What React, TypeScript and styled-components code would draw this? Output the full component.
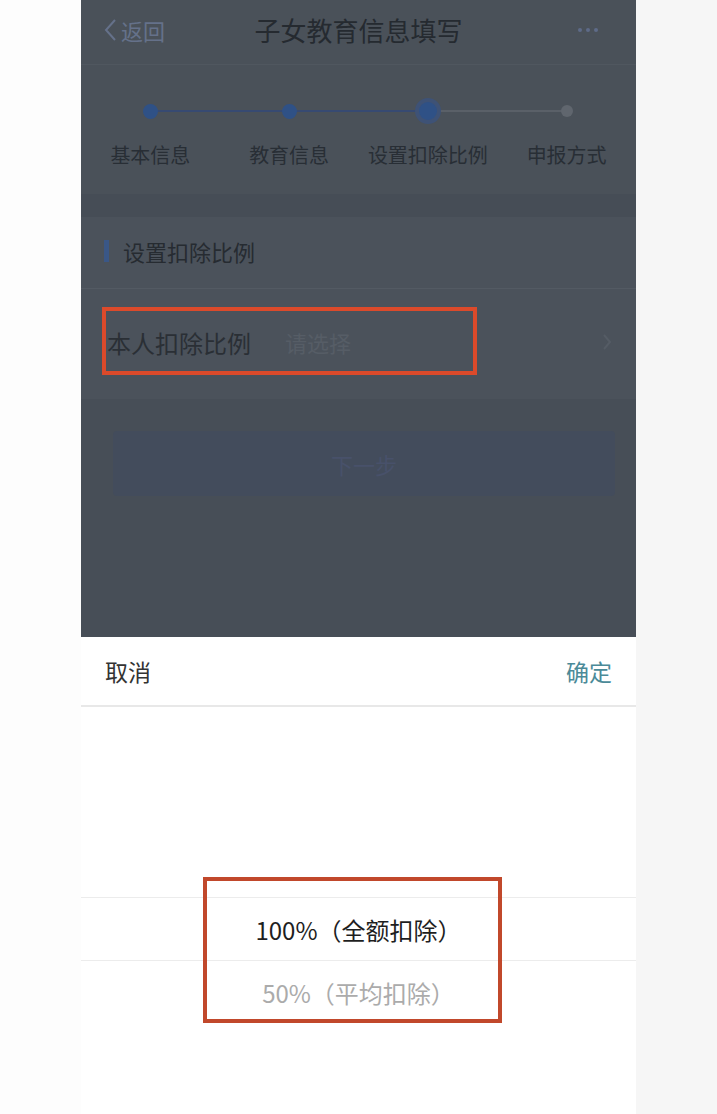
import styled, { createGlobalStyle } from 'styled-components';

const GlobalStyle = createGlobalStyle`
    html, body { margin: 0; padding: 0; background: #ffffff; }
    body { font-family: "Noto Sans CJK SC", "Noto Sans", sans-serif; }
`;

const Stage = styled.div`
    display: grid;
    grid-template-columns: 81px 555px 1fr;
    height: 1114px;
    overflow: hidden;
`;

const Margin = styled.div<{ tint?: boolean }>`
    background: ${props => (props.tint ? '#f6f6f6' : '#fdfdfd')};
`;

const Phone = styled.div`
    display: flex;
    flex-direction: column;
    height: 1114px;
`;

const DimmedPage = styled.div`
    height: 637px;
    background: #4a5159;
    display: flex;
    flex-direction: column;
    position: relative;
`;

const NavBar = styled.div`
    height: 65px;
    box-sizing: border-box;
    padding: 0 38px 5px 22px;
    border-bottom: 1px solid #50575f;
    display: flex;
    align-items: center;
    justify-content: space-between;
    position: relative;
`;

const Back = styled.div`
    display: flex;
    align-items: center;
    gap: 4px;
    color: #65718a;
    font-size: 22px;
`;

const Title = styled.div`
    position: absolute;
    left: 0;
    right: 0;
    top: 0;
    bottom: 5px;
    display: flex;
    align-items: center;
    justify-content: center;
    font-size: 26px;
    color: #252a30;
    pointer-events: none;
`;

const More = styled.div`
    display: flex;
    gap: 4px;
    span {
        width: 4px;
        height: 4px;
        border-radius: 50%;
        background: #5e6b88;
    }
`;

const Steps = styled.div`
    height: 129px;
    display: grid;
    grid-template-columns: repeat(4, 1fr);
`;

const Step = styled.div<{ lineLeft?: string; lineRight?: string }>`
    position: relative;
    display: flex;
    flex-direction: column;
    align-items: center;
    padding-top: 36px;

    &::before, &::after {
        content: '';
        position: absolute;
        top: 45px;
        height: 2px;
        width: 50%;
    }
    &::before {
        left: 0;
        background: ${props => props.lineLeft || 'transparent'};
    }
    &::after {
        right: 0;
        background: ${props => props.lineRight || 'transparent'};
    }
`;

const DotSlot = styled.div`
    height: 20px;
    display: flex;
    align-items: center;
    justify-content: center;
`;

const Dot = styled.div<{ state: 'done' | 'current' | 'todo' }>`
    position: relative;
    z-index: 1;
    width: ${props => (props.state === 'current' ? 18 : props.state === 'done' ? 15 : 12)}px;
    height: ${props => (props.state === 'current' ? 18 : props.state === 'done' ? 15 : 12)}px;
    border-radius: 50%;
    background: ${props => (props.state === 'todo' ? '#60666e' : '#2f5186')};
    box-shadow: ${props => (props.state === 'current' ? '0 0 0 4px #3e5276' : 'none')};
`;

const StepLabel = styled.div`
    margin-top: 19px;
    font-size: 20px;
    color: #282e35;
    white-space: nowrap;
`;

const Band = styled.div<{ h: number }>`
    height: ${props => props.h}px;
    background: #464d56;
`;

const Card = styled.div`
    background: #4b525b;
    display: flex;
    flex-direction: column;
`;

const SectionTitle = styled.div`
    height: 72px;
    box-sizing: border-box;
    padding: 0 0 4px 23px;
    display: flex;
    align-items: center;
    gap: 14px;
    font-size: 22px;
    color: #262b31;
    border-bottom: 1px solid #535a63;

    &::before {
        content: '';
        width: 5px;
        height: 22px;
        background: #3a5787;
    }
`;

const FieldRow = styled.div`
    height: 110px;
    box-sizing: border-box;
    display: flex;
    align-items: center;
    padding: 0 24px 4px 26px;
    position: relative;
`;

const FieldLabel = styled.div`
    font-size: 24px;
    color: #2a2f35;
    width: 178px;
`;

const FieldValue = styled.div`
    flex: 1;
    font-size: 22px;
    color: #565d66;
`;

const Highlight = styled.div<{ color: string }>`
    position: absolute;
    border: 4px solid ${props => props.color};
`;

const ButtonArea = styled.div`
    flex: 1;
    background: #474e57;
    padding: 32px 21px 0 32px;
`;

const NextButton = styled.div`
    height: 65px;
    border-radius: 4px;
    background: #434c5c;
    display: flex;
    align-items: center;
    justify-content: center;
    font-size: 22px;
    color: #48516a;
`;

const Sheet = styled.div`
    flex: 1;
    background: #ffffff;
    display: flex;
    flex-direction: column;
`;

const SheetHeader = styled.div`
    height: 68px;
    border-bottom: 2px solid #e8e8e8;
    display: flex;
    align-items: center;
    justify-content: space-between;
    padding: 0 24px;
`;

const SheetAction = styled.div<{ primary?: boolean }>`
    font-size: 23px;
    color: ${props => (props.primary ? '#4b8a98' : '#333333')};
`;

const Picker = styled.div`
    flex: 1;
    padding-top: 190px;
    display: flex;
    flex-direction: column;
    position: relative;
`;

const Option = styled.div<{ selected?: boolean }>`
    height: 62px;
    display: flex;
    align-items: center;
    justify-content: center;
    font-size: 24px;
    color: ${props => (props.selected ? '#1e1e1e' : '#ababab')};
    border-top: ${props => (props.selected ? '1px solid #ececec' : 'none')};
    border-bottom: ${props => (props.selected ? '1px solid #ececec' : 'none')};
`;

const steps: { label: string; state: 'done' | 'current' | 'todo' }[] = [
    { label: '基本信息', state: 'done' },
    { label: '教育信息', state: 'done' },
    { label: '设置扣除比例', state: 'current' },
    { label: '申报方式', state: 'todo' },
];

const lineColor = (state: string) => (state === 'todo' ? '#5a6068' : '#374a72');

export default function App() {
    return (
        <>
            <GlobalStyle />
            <Stage>
                <Margin />
                <Phone>
                    <DimmedPage>
                        <NavBar>
                            <Back>
                                <svg width="14" height="24" viewBox="0 0 14 24">
                                    <path d="M12 2 L3 12 L12 22" fill="none" stroke="#65718a" strokeWidth="2" />
                                </svg>
                                返回
                            </Back>
                            <Title>子女教育信息填写</Title>
                            <More><span /><span /><span /></More>
                        </NavBar>
                        <Steps>
                            {steps.map((s, i) => (
                                <Step
                                    key={s.label}
                                    lineLeft={i > 0 ? lineColor(s.state) : undefined}
                                    lineRight={i < steps.length - 1 ? lineColor(steps[i + 1].state) : undefined}
                                >
                                    <DotSlot><Dot state={s.state} /></DotSlot>
                                    <StepLabel>{s.label}</StepLabel>
                                </Step>
                            ))}
                        </Steps>
                        <Band h={23} />
                        <Card>
                            <SectionTitle>设置扣除比例</SectionTitle>
                            <FieldRow>
                                <FieldLabel>本人扣除比例</FieldLabel>
                                <FieldValue>请选择</FieldValue>
                                <svg width="10" height="18" viewBox="0 0 10 18">
                                    <path d="M2 2 L8 9 L2 16" fill="none" stroke="#555c65" strokeWidth="2" />
                                </svg>
                                <Highlight color="#dc4a2b" style={{ left: 21, top: 18, width: 367, height: 60 }} />
                            </FieldRow>
                        </Card>
                        <ButtonArea>
                            <NextButton>下一步</NextButton>
                        </ButtonArea>
                    </DimmedPage>
                    <Sheet>
                        <SheetHeader>
                            <SheetAction>取消</SheetAction>
                            <SheetAction primary>确定</SheetAction>
                        </SheetHeader>
                        <Picker>
                            <Option selected>100%（全额扣除）</Option>
                            <Option>50%（平均扣除）</Option>
                            <Highlight color="#c1482b" style={{ left: 122, top: 170, width: 291, height: 138 }} />
                        </Picker>
                    </Sheet>
                </Phone>
                <Margin tint />
            </Stage>
        </>
    );
}
